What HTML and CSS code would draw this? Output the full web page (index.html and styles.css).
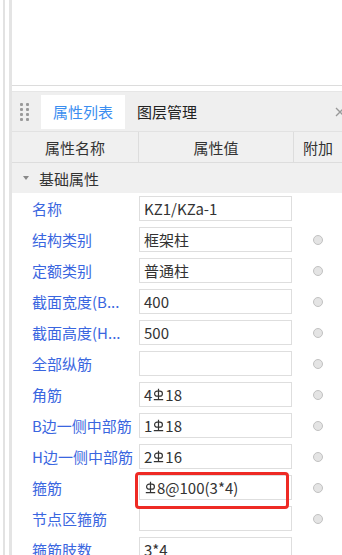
FILE: index.html
```html
<!DOCTYPE html>
<html lang="zh-CN">
<head>
    <meta charset="UTF-8">
    <meta name="viewport" content="width=device-width, initial-scale=1.0">
    <title>属性列表</title>
    <link rel="stylesheet" href="styles.css">
</head>
<body>
    <div class="app">
        <div class="rail"></div>
        <div class="main">
            <!-- drawing area -->
            <div class="viewport"></div>

            <div class="tabs">
                <div class="grip">
                    <span></span><span></span><span></span><span></span>
                    <span></span><span></span><span></span><span></span>
                </div>
                <div class="tab active">属性列表</div>
                <div class="tab">图层管理</div>
                <div class="close">
                    <svg width="10" height="10" viewBox="0 0 10 10"><path d="M1 1L9 9M9 1L1 9" stroke="#999" stroke-width="1.3" fill="none"/></svg>
                </div>
            </div>

            <div class="grid head">
                <div class="hcell">属性名称</div>
                <div class="hcell">属性值</div>
                <div class="hcell last">附加</div>
            </div>

            <div class="group"><span class="caret"></span>基础属性</div>

            <div class="grid row">
                <div class="label">名称</div>
                <div class="value"><div class="box">KZ1/KZa-1</div></div>
                <div class="extra"></div>
            </div>
            <div class="grid row">
                <div class="label">结构类别</div>
                <div class="value"><div class="box">框架柱</div></div>
                <div class="extra"><span class="radio"></span></div>
            </div>
            <div class="grid row">
                <div class="label">定额类别</div>
                <div class="value"><div class="box">普通柱</div></div>
                <div class="extra"><span class="radio"></span></div>
            </div>
            <div class="grid row">
                <div class="label">截面宽度(B...</div>
                <div class="value"><div class="box">400</div></div>
                <div class="extra"><span class="radio"></span></div>
            </div>
            <div class="grid row">
                <div class="label">截面高度(H...</div>
                <div class="value"><div class="box">500</div></div>
                <div class="extra"><span class="radio"></span></div>
            </div>
            <div class="grid row">
                <div class="label">全部纵筋</div>
                <div class="value"><div class="box"></div></div>
                <div class="extra"><span class="radio"></span></div>
            </div>
            <div class="grid row">
                <div class="label">角筋</div>
                <div class="value"><div class="box">4<svg class="bar" viewBox="0 0 11 13"><path d="M5.5 0.8V11.6M0.8 11.6H10.2" stroke="#333" stroke-width="1.2" fill="none"/><rect x="1.6" y="3.2" width="7.8" height="5" rx="2.5" stroke="#333" stroke-width="1.2" fill="none"/></svg>18</div></div>
                <div class="extra"><span class="radio"></span></div>
            </div>
            <div class="grid row">
                <div class="label">B边一侧中部筋</div>
                <div class="value"><div class="box">1<svg class="bar" viewBox="0 0 11 13"><path d="M5.5 0.8V11.6M0.8 11.6H10.2" stroke="#333" stroke-width="1.2" fill="none"/><rect x="1.6" y="3.2" width="7.8" height="5" rx="2.5" stroke="#333" stroke-width="1.2" fill="none"/></svg>18</div></div>
                <div class="extra"><span class="radio"></span></div>
            </div>
            <div class="grid row">
                <div class="label">H边一侧中部筋</div>
                <div class="value"><div class="box">2<svg class="bar" viewBox="0 0 11 13"><path d="M5.5 0.8V11.6M0.8 11.6H10.2" stroke="#333" stroke-width="1.2" fill="none"/><rect x="1.6" y="3.2" width="7.8" height="5" rx="2.5" stroke="#333" stroke-width="1.2" fill="none"/></svg>16</div></div>
                <div class="extra"><span class="radio"></span></div>
            </div>
            <div class="grid row marked">
                <div class="label">箍筋</div>
                <div class="value"><div class="box"><svg class="bar" viewBox="0 0 11 13"><path d="M5.5 0.8V11.6M0.8 11.6H10.2" stroke="#333" stroke-width="1.2" fill="none"/><rect x="1.6" y="3.2" width="7.8" height="5" rx="2.5" stroke="#333" stroke-width="1.2" fill="none"/></svg>8@100(3*4)</div></div>
                <div class="extra"><span class="radio"></span></div>
                <div class="highlight"></div>
            </div>
            <div class="grid row">
                <div class="label">节点区箍筋</div>
                <div class="value"><div class="box"></div></div>
                <div class="extra"><span class="radio"></span></div>
            </div>
            <div class="grid row">
                <div class="label">箍筋肢数</div>
                <div class="value"><div class="box">3*4</div></div>
                <div class="extra"></div>
            </div>
        </div>
    </div>
</body>
</html>
```

FILE: styles.css
```css
body {
    margin: 0;
    width: 342px;
    height: 555px;
    overflow: hidden;
    background: #fff;
    font-family: "Noto Sans CJK SC", "Liberation Sans", sans-serif;
    font-size: 15px;
    color: #333;
}

.app {
    display: flex;
    height: 555px;
    padding-left: 3px;
}

.rail {
    width: 2px;
    background: #e2e2e2;
    flex: none;
}

.main {
    flex: 1;
    margin-left: 4px;
    border-left: 3px solid #e4e4e4;
    overflow: hidden;
    display: flex;
    flex-direction: column;
}

.viewport {
    height: 85px;
    flex: none;
    border-bottom: 1px solid #dcdcdc;
    margin-bottom: 5px;
}

/* tab bar */
.tabs {
    height: 39px;
    flex: none;
    background: #efefef;
    display: flex;
    align-items: center;
    border-top: 1px solid #e6e6e6;
}

.grip {
    display: grid;
    grid-template-columns: 3px 3px;
    grid-auto-rows: 3px;
    column-gap: 3px;
    row-gap: 2px;
    margin: 0 12px 0 8px;
}

.grip span {
    background: #9a9a9a;
    border-radius: 1px;
}

.tab {
    height: 34px;
    line-height: 34px;
    padding: 0 12px;
    color: #222;
}

.tab.active {
    background: #fff;
    color: #3b8ef0;
}

.close {
    margin-left: auto;
    margin-right: -3px;
    display: flex;
}

/* table */
.grid {
    display: grid;
    grid-template-columns: 127px 155px 1fr;
    flex: none;
}

.head {
    height: 30px;
    background: #f0f0f0;
    border-top: 1px solid #e2e2e2;
    border-bottom: 1px solid #dddddd;
}

.hcell {
    display: flex;
    align-items: center;
    justify-content: center;
    border-right: 1px solid #dddddd;
    color: #333;
}

.hcell.last {
    border-right: none;
}

.group {
    height: 30px;
    flex: none;
    background: #f0f0f0;
    display: flex;
    align-items: center;
    padding-left: 11px;
    color: #333;
}

.caret {
    width: 0;
    height: 0;
    border-left: 3px solid transparent;
    border-right: 3px solid transparent;
    border-top: 4px solid #888;
    margin-right: 10px;
}

.row {
    height: 31px;
    position: relative;
}

.label {
    display: flex;
    align-items: center;
    padding-left: 20px;
    color: #3a66e0;
    white-space: nowrap;
    overflow: hidden;
}

.value {
    display: flex;
    align-items: center;
}

.box {
    width: 153px;
    height: 25px;
    box-sizing: border-box;
    border: 1px solid #dedede;
    background: #fff;
    display: flex;
    align-items: center;
    padding-left: 4px;
    color: #333;
    white-space: nowrap;
}

.bar {
    width: 11px;
    height: 13px;
    margin: 0 1px;
}

.extra {
    display: flex;
    align-items: center;
    justify-content: center;
}

.radio {
    width: 8px;
    height: 8px;
    border-radius: 50%;
    background: #e4e4e4;
    border: 1px solid #c2c2c2;
}

/* red annotation frame */
.highlight {
    position: absolute;
    z-index: 2;
    left: 123px;
    top: 0;
    width: 154px;
    height: 37px;
    box-sizing: border-box;
    border: 3.5px solid #ee2a24;
    border-radius: 4px;
}
```
